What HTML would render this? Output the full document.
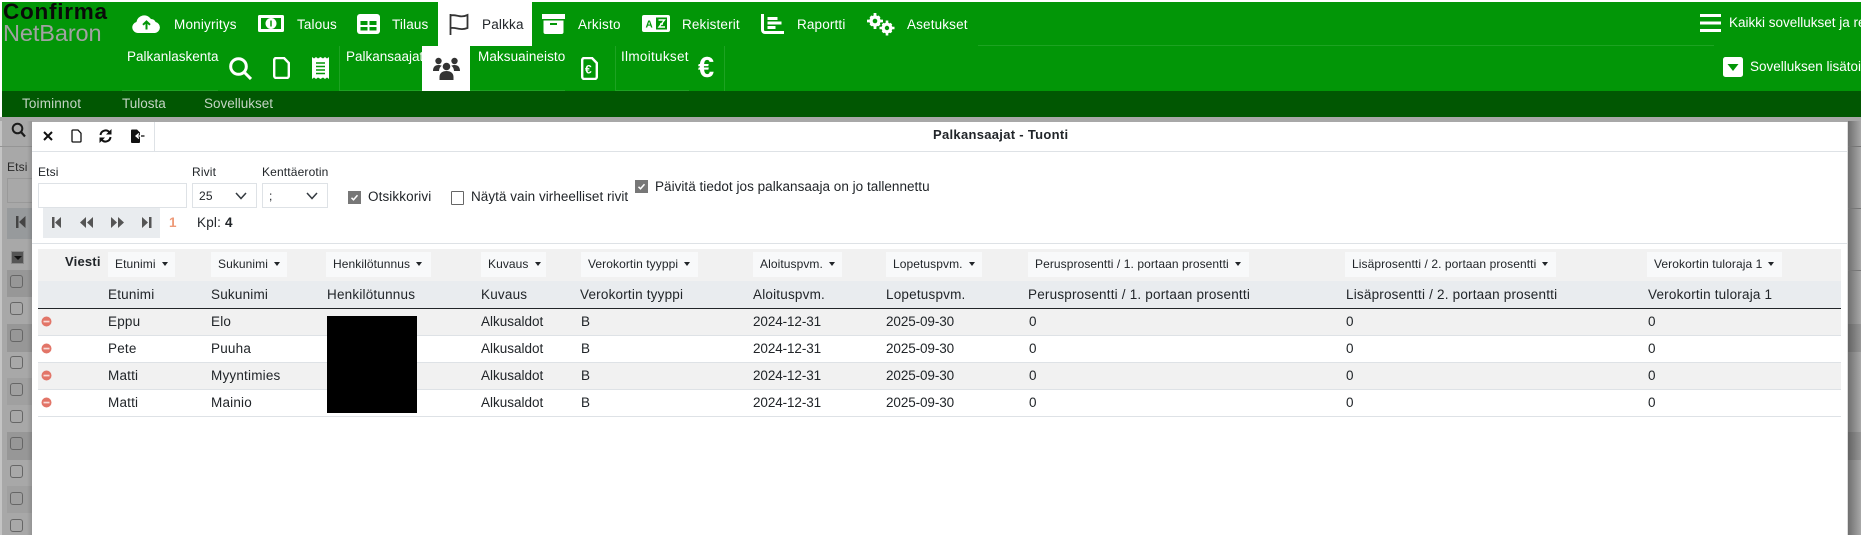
<!DOCTYPE html>
<html lang="fi"><head><meta charset="utf-8"><title>Palkansaajat - Tuonti</title>
<style>
html,body{margin:0;padding:0;background:#fff}
#p{position:relative;width:1861px;height:535px;overflow:hidden;font-family:"Liberation Sans",Arial,sans-serif;font-size:13.5px;color:#212529;letter-spacing:.2px}
#p div,#p svg{position:absolute}
.t{white-space:nowrap;line-height:16px;height:16px}
.w{color:#fff}
.s{font-size:12px;letter-spacing:.15px}
.f{letter-spacing:.1px}
.d{letter-spacing:-.1px}
.k{letter-spacing:0}
.n{letter-spacing:.15px}
.b{background:#f8f9fa;height:25px;top:252px;line-height:24px;font-size:12px;letter-spacing:.08px;padding-left:7px;box-sizing:border-box;white-space:nowrap}
.b i{display:inline-block;border:3.5px solid transparent;border-top:4px solid #212529;border-bottom:0;margin-left:6px;vertical-align:2px}
.cb{width:13px;height:13px;border:1px solid #666;border-radius:3px;left:10px;box-sizing:border-box}
</style></head><body><div id="p">

<!-- overlay background -->
<div style="left:0;top:117px;width:1861px;height:418px;background:#a8a8a8"></div>
<div style="left:0;top:121px;width:2px;height:414px;background:#c4c4c4"></div>
<div style="left:0;top:146px;width:32px;height:1px;background:#959595"></div>
<div style="left:7px;top:208px;width:25px;height:31px;background:#979a9c"></div>
<div style="left:7px;top:270px;width:25px;height:27px;background:#979797"></div>
<div style="left:7px;top:324px;width:25px;height:28px;background:#979797"></div>
<div style="left:7px;top:378px;width:25px;height:27px;background:#a0a0a0"></div>
<div style="left:7px;top:432px;width:25px;height:28px;background:#979797"></div>
<div style="left:7px;top:486px;width:25px;height:27px;background:#a0a0a0"></div>
<svg style="left:11px;top:122px" width="15" height="16" viewBox="0 0 15 16"><circle cx="6.500" cy="6.500" r="4.800" fill="none" stroke="#1c1c1c" stroke-width="2"/><path d="M10 10l4 4.500" stroke="#1c1c1c" stroke-width="2.200"/></svg>
<div class="t s" style="left:7px;top:159px;color:#2a2a2a">Etsi</div>
<div style="left:7px;top:178px;width:26px;height:25px;border:1px solid #999;box-sizing:border-box"></div>
<svg style="left:16px;top:216px" width="10" height="12" viewBox="0 0 10 12"><path d="M0 0h2.500v12H0zM9.500 0v12L3 6z" fill="#444"/></svg>
<div style="left:11px;top:251px;width:13px;height:13px;background:#555;border:1px solid #8a8a8a;box-sizing:border-box"></div>
<div style="left:14px;top:256px;border:4px solid transparent;border-top:4px solid #111;border-bottom:0"></div>
<div class="cb" style="top:275px"></div><div class="cb" style="top:302px"></div><div class="cb" style="top:329px"></div><div class="cb" style="top:356px"></div><div class="cb" style="top:383px"></div><div class="cb" style="top:410px"></div><div class="cb" style="top:437px"></div><div class="cb" style="top:465px"></div><div class="cb" style="top:492px"></div><div class="cb" style="top:519px"></div>
<div style="left:1848px;top:121px;width:13px;height:414px;background:linear-gradient(90deg,#6f6f6f,#a8a8a8)"></div>
<div style="left:1848px;top:146px;width:13px;height:1px;background:#777"></div>
<div style="left:1848px;top:208px;width:13px;height:1px;background:#777"></div>
<div style="left:1848px;top:270px;width:13px;height:1px;background:#777"></div>
<div style="left:1848px;top:324px;width:13px;height:28px;background:rgba(0,0,0,.1)"></div>
<div style="left:1848px;top:432px;width:13px;height:28px;background:rgba(0,0,0,.1)"></div>
<div style="left:27px;top:121px;width:5px;height:414px;background:linear-gradient(90deg,rgba(0,0,0,0),rgba(0,0,0,.12))"></div>

<!-- header -->
<div style="left:2px;top:2px;width:1859px;height:89px;background:#029607"></div>
<div style="left:2px;top:91px;width:1859px;height:26px;background:#015702"></div>
<div style="left:978px;top:45px;width:736px;height:1px;background:#1da322"></div>
<div style="left:122px;top:90px;width:96px;height:1px;background:#1da322"></div>
<div style="left:339px;top:46px;width:1px;height:45px;background:#1da322"></div>
<div style="left:340px;top:90px;width:82px;height:1px;background:#1da322"></div>
<div style="left:470px;top:90px;width:95px;height:1px;background:#1da322"></div>
<div style="left:615px;top:46px;width:1px;height:45px;background:#1da322"></div>
<div style="left:616px;top:90px;width:73px;height:1px;background:#1da322"></div>
<div style="left:724px;top:46px;width:1px;height:45px;background:#1da322"></div>

<!-- logo -->
<div class="t" style="left:3px;top:0;height:24px;line-height:24px;font-size:22.5px;font-weight:700;color:#0a0a0a;letter-spacing:.75px">Confirma</div>
<div class="t" style="left:3px;top:21px;height:24px;line-height:24px;font-size:23.5px;color:#a2a2a2;letter-spacing:-.1px">NetBaron</div>

<!-- main nav icons -->
<svg style="left:132px;top:14px" width="29" height="19" viewBox="0 0 29 19"><path d="M6 19a5.600 5.600 0 0 1-1.600-11A8 8 0 0 1 19 5a5 5 0 0 1 4.600 3A5.600 5.600 0 0 1 23 19z" fill="#fff"/><path d="M14.500 15.500V8M11 10.800l3.500-3.300 3.500 3.300" fill="none" stroke="#029607" stroke-width="2"/></svg>
<svg style="left:258px;top:15px" width="26" height="17" viewBox="0 0 26 17"><path d="M1.500 1.500h23v14h-23z" fill="#029607" stroke="#fff" stroke-width="3" stroke-linejoin="round"/><circle cx="13" cy="8.500" r="5.500" fill="#fff"/><path d="M13 5.500v6" stroke="#029607" stroke-width="1.500"/></svg>
<svg style="left:357px;top:14px" width="23" height="20" viewBox="0 0 23 20"><rect width="23" height="20" rx="3" fill="#fff"/><path d="M3.500 7h7v4h-7zM12.500 7h7v4h-7zM3.500 13h7v3.500h-7zM12.500 13h7v3.500h-7z" fill="#029607"/></svg>
<div style="left:438px;top:2px;width:94px;height:44px;background:#fff"></div>
<svg style="left:449px;top:13px" width="20" height="22" viewBox="0 0 20 22"><path d="M1.500 1v21" stroke="#333" stroke-width="1.800"/><path d="M1.500 2.500c3-1 6 .2 9 .7s5 .2 8-1.200v13c-3 1.200-5 1.400-8 .9s-6-1.500-9-.9" fill="none" stroke="#333" stroke-width="1.800"/></svg>
<svg style="left:542px;top:14px" width="23" height="20" viewBox="0 0 23 20"><rect width="23" height="5" fill="#fff"/><path d="M1.500 6.500h20V18a2 2 0 0 1-2 2h-16a2 2 0 0 1-2-2z" fill="#fff"/><path d="M8 10h7" stroke="#029607" stroke-width="2"/></svg>
<svg style="left:642px;top:15px" width="28" height="17" viewBox="0 0 28 17"><rect width="28" height="17" rx="2" fill="#fff"/><rect x="14" y="2.500" width="11" height="12" fill="#029607"/><text x="3.500" y="12.500" font-size="10" font-weight="700" fill="#029607" font-family="Liberation Sans">A</text><path d="M16.500 5h6l-5.500 7h6M18 9h3" fill="none" stroke="#fff" stroke-width="1.400"/></svg>
<svg style="left:761px;top:14px" width="23" height="20" viewBox="0 0 23 20"><path d="M1.500 0v16a2.500 2.500 0 0 0 2.500 2.500H23" fill="none" stroke="#fff" stroke-width="3"/><path d="M6.500 3h10v3H6.500zM6.500 7.500h14v3H6.500zM6.500 12h8v3h-8z" fill="#fff"/></svg>
<svg style="left:867px;top:13px" width="28" height="23" viewBox="0 0 28 23"><g fill="#fff"><circle cx="8" cy="8" r="5.600"/><path d="M6.600 0h2.800v16H6.600zM0 6.600h16v2.800H0zM2.500 4.400l2-2 9 9-2 2zM11.500 2.400l2 2-9 9-2-2z"/></g><circle cx="8" cy="8" r="2.300" fill="#029607"/><g fill="#fff"><circle cx="20" cy="15" r="5.400"/><path d="M18.700 7.500h2.600v15h-2.600zM12.500 13.700h15v2.600h-15zM14.700 11.500l1.800-1.800 8.800 8.800-1.800 1.800zM23.500 9.700l1.800 1.800-8.800 8.800-1.800-1.800z"/></g><circle cx="20" cy="15" r="2.200" fill="#029607"/></svg>

<div class="t w" style="left:174px;top:17px">Moniyritys</div>
<div class="t w n" style="left:297px;top:17px">Talous</div>
<div class="t w n" style="left:392px;top:17px">Tilaus</div>
<div class="t" style="left:482px;top:17px">Palkka</div>
<div class="t w" style="left:578px;top:17px">Arkisto</div>
<div class="t w n" style="left:682px;top:17px">Rekisterit</div>
<div class="t w n" style="left:797px;top:17px">Raportti</div>
<div class="t w n" style="left:907px;top:17px">Asetukset</div>

<!-- sub nav -->
<div class="t w k" style="left:127px;top:49px">Palkanlaskenta</div>
<div class="t w k" style="left:346px;top:49px">Palkansaajat</div>
<div class="t w k" style="left:478px;top:49px;letter-spacing:.08px">Maksuaineisto</div>
<div class="t w" style="left:621px;top:49px;letter-spacing:.3px">Ilmoitukset</div>
<svg style="left:229px;top:57px" width="23" height="23" viewBox="0 0 23 23"><circle cx="9.500" cy="9.500" r="7.800" fill="none" stroke="#fff" stroke-width="3"/><path d="M15 15l7 7" stroke="#fff" stroke-width="3"/></svg>
<svg style="left:273px;top:57px" width="17" height="22" viewBox="0 0 17 22"><path d="M1.200 3a2 2 0 0 1 2-2H11l4.800 5v13a2 2 0 0 1-2 2H3.200a2 2 0 0 1-2-2z" fill="none" stroke="#fff" stroke-width="2.400"/></svg>
<svg style="left:312px;top:57px" width="17" height="22" viewBox="0 0 17 22"><path d="M0 0l2 1.500L4 0l2 1.500L8.500 0 11 1.500 13 0l2 1.500L17 0v22l-2-1.500-2 1.500-2-1.500L8.500 22 6 20.500 4 22l-2-1.500L0 22z" fill="#fff"/><path d="M4 6h9M4 9.500h9M4 13h9M4 16.500h9" stroke="#029607" stroke-width="1.500"/></svg>
<div style="left:422px;top:46px;width:48px;height:45px;background:#fff"></div>
<svg style="left:433px;top:57px" width="27" height="23" viewBox="0 0 27 23"><g fill="#333"><circle cx="5.500" cy="4" r="3.200"/><circle cx="21.500" cy="4" r="3.200"/><path d="M0 14c0-4 2-6 5.500-6 1.300 0 2.400.3 3.200.8C7 10 6 12 6 14z"/><path d="M27 14c0-4-2-6-5.500-6-1.300 0-2.400.3-3.200.8C20 10 21 12 21 14z"/><circle cx="13.500" cy="9.500" r="3.800"/><path d="M6.500 23v-3c0-4 3-6 7-6s7 2 7 6v3z"/></g></svg>
<svg style="left:581px;top:57px" width="17" height="23" viewBox="0 0 17 23"><path d="M1.200 3a2 2 0 0 1 2-2H11l4.800 5v14a2 2 0 0 1-2 2H3.200a2 2 0 0 1-2-2z" fill="none" stroke="#fff" stroke-width="2.400"/><text x="4" y="16.500" font-size="12" font-weight="700" fill="#fff" font-family="Liberation Sans">€</text></svg>
<div class="t w k" style="left:698px;top:55px;height:26px;line-height:26px;font-size:29px;font-weight:700">€</div>

<!-- right header -->
<svg style="left:1700px;top:14px" width="21" height="18" viewBox="0 0 21 18"><path d="M0 1.500h21M0 9h21M0 16.500h21" stroke="#fff" stroke-width="3"/></svg>
<div class="t w k" style="left:1729px;top:15px">Kaikki sovellukset ja re</div>
<svg style="left:1723px;top:57px" width="20" height="20" viewBox="0 0 20 20"><rect width="20" height="20" rx="2.500" fill="#fff"/><path d="M4.500 7h11L10 14z" fill="#029607"/></svg>
<div class="t w k" style="left:1750px;top:59px">Sovelluksen lisätoi</div>

<!-- dark nav -->
<div class="t n" style="left:22px;top:96px;color:#c4d4c4">Toiminnot</div>
<div class="t k" style="left:122px;top:96px;color:#c4d4c4">Tulosta</div>
<div class="t k" style="left:204px;top:96px;color:#c4d4c4">Sovellukset</div>

<!-- modal -->
<div style="left:32px;top:122px;width:1816px;height:413px;background:#fff;border-right:1px solid #ddd;box-sizing:border-box"></div>
<div style="left:32px;top:151px;width:1815px;height:1px;background:#dee2e6"></div>
<div style="left:154px;top:122px;width:1px;height:29px;background:#dee2e6"></div>
<svg style="left:43px;top:131px" width="10" height="10" viewBox="0 0 10 10"><path d="M1 1l8 8M9 1l-8 8" stroke="#111" stroke-width="2"/></svg>
<svg style="left:71px;top:129px" width="11" height="14" viewBox="0 0 11 14"><path d="M1 2a1 1 0 0 1 1-1h5l3 3.200V12a1 1 0 0 1-1 1H2a1 1 0 0 1-1-1z" fill="none" stroke="#111" stroke-width="1.300"/></svg>
<svg style="left:99px;top:129px" width="13" height="14" viewBox="0 0 13 14"><path d="M1.500 6A5 5 0 0 1 10.500 3.500M11.500 8A5 5 0 0 1 2.500 10.500" fill="none" stroke="#111" stroke-width="2"/><path d="M12.500 0v5.500H7zM.5 14V8.500H6z" fill="#111"/></svg>
<svg style="left:130px;top:129px" width="15" height="14" viewBox="0 0 15 14"><path d="M1 1.500a1 1 0 0 1 1-1h5l3 3V13a1 1 0 0 1-1 1H2a1 1 0 0 1-1-1z" fill="#111"/><path d="M14.500 7H6.500M9 4.500L6 7l3 2.500" fill="none" stroke="#fff" stroke-width="1.300"/><path d="M11 7h3.500" stroke="#111" stroke-width="1.300"/></svg>
<div class="t" style="left:933px;top:127px;font-weight:700;font-size:13px;letter-spacing:.3px">Palkansaajat - Tuonti</div>

<!-- filters -->
<div class="t s" style="left:38px;top:164px">Etsi</div>
<div class="t s" style="left:192px;top:164px">Rivit</div>
<div class="t s" style="left:262px;top:164px">Kenttäerotin</div>
<div style="left:38px;top:183px;width:149px;height:25px;border:1px solid #dee2e6;box-sizing:border-box"></div>
<div style="left:192px;top:183px;width:65px;height:25px;border:1px solid #dee2e6;box-sizing:border-box"></div>
<div style="left:262px;top:183px;width:66px;height:25px;border:1px solid #dee2e6;box-sizing:border-box"></div>
<div class="t s" style="left:199px;top:188px">25</div>
<div class="t s" style="left:269px;top:188px">;</div>
<svg style="left:235px;top:192px" width="12" height="8" viewBox="0 0 12 8"><path d="M1 1l5 5.500L11 1" fill="none" stroke="#343a40" stroke-width="1.500"/></svg>
<svg style="left:306px;top:192px" width="12" height="8" viewBox="0 0 12 8"><path d="M1 1l5 5.500L11 1" fill="none" stroke="#343a40" stroke-width="1.500"/></svg>
<svg style="left:348px;top:191px" width="13" height="13" viewBox="0 0 13 13"><rect width="13" height="13" fill="#777"/><path d="M3.500 6.800l2 2 4-4.500" fill="none" stroke="#fff" stroke-width="1.500"/></svg>
<div class="t f" style="left:368px;top:189px">Otsikkorivi</div>
<div style="left:451px;top:191px;width:13px;height:14px;border:1px solid #666;border-radius:1px;box-sizing:border-box"></div>
<div class="t" style="left:471px;top:189px;letter-spacing:.04px">Näytä vain virheelliset rivit</div>
<svg style="left:635px;top:180px" width="13" height="13" viewBox="0 0 13 13"><rect width="13" height="13" fill="#777"/><path d="M3.500 6.800l2 2 4-4.500" fill="none" stroke="#fff" stroke-width="1.500"/></svg>
<div class="t" style="left:655px;top:179px;letter-spacing:.03px">Päivitä tiedot jos palkansaaja on jo tallennettu</div>

<!-- pager -->
<div style="left:43px;top:208px;width:117px;height:30px;background:#e9ecef"></div>
<svg style="left:52px;top:217px" width="110" height="11" viewBox="0 0 110 11"><g fill="#555"><path d="M0 0h2.500v11H0zM9 0v11L3 5.500z"/><path d="M34 0v11l-6-5.500zM41 0v11l-6-5.500z"/><path d="M59 0v11l6-5.500zM66 0v11l6-5.500z"/><path d="M90 0v11l6-5.500zM97 0h2.500v11H97z"/></g></svg>
<div class="t" style="left:169px;top:215px;color:#ee9a78;font-weight:700">1</div>
<div class="t" style="left:197px;top:215px">Kpl: <b>4</b></div>
<div style="left:32px;top:243px;width:1815px;height:1px;background:#dee2e6"></div>

<!-- table -->
<div style="left:38px;top:249px;width:1803px;height:32px;background:#f1f1f1"></div>
<div style="left:38px;top:281px;width:1803px;height:27px;background:#e9ecef"></div>
<div style="left:38px;top:308px;width:1803px;height:1px;background:#212529"></div>
<div style="left:38px;top:309px;width:1803px;height:26px;background:#f1f1f1"></div>
<div style="left:38px;top:363px;width:1803px;height:26px;background:#f1f1f1"></div>
<div style="left:38px;top:335px;width:1803px;height:1px;background:#dee2e6"></div>
<div style="left:38px;top:362px;width:1803px;height:1px;background:#dee2e6"></div>
<div style="left:38px;top:389px;width:1803px;height:1px;background:#dee2e6"></div>
<div style="left:38px;top:416px;width:1803px;height:1px;background:#dee2e6"></div>

<div class="t" style="left:65px;top:254px;font-weight:700;font-size:13px;letter-spacing:.2px">Viesti</div>
<div class="b" style="left:108px;width:67px">Etunimi<i></i></div>
<div class="b" style="left:211px;width:76px">Sukunimi<i></i></div>
<div class="b" style="left:326px;width:105px">Henkilötunnus<i></i></div>
<div class="b" style="left:481px;width:65px">Kuvaus<i></i></div>
<div class="b" style="left:581px;width:117px">Verokortin tyyppi<i></i></div>
<div class="b" style="left:753px;width:89px">Aloituspvm.<i></i></div>
<div class="b" style="left:886px;width:96px">Lopetuspvm.<i></i></div>
<div class="b" style="left:1028px;width:221px">Perusprosentti / 1. portaan prosentti<i></i></div>
<div class="b" style="left:1345px;width:211px">Lisäprosentti / 2. portaan prosentti<i></i></div>
<div class="b" style="left:1647px;width:135px">Verokortin tuloraja 1<i></i></div>

<div class="t" style="left:108px;top:287px">Etunimi</div>
<div class="t" style="left:211px;top:287px">Sukunimi</div>
<div class="t" style="left:327px;top:287px">Henkilötunnus</div>
<div class="t" style="left:481px;top:287px">Kuvaus</div>
<div class="t" style="left:580px;top:287px">Verokortin tyyppi</div>
<div class="t" style="left:753px;top:287px">Aloituspvm.</div>
<div class="t" style="left:886px;top:287px">Lopetuspvm.</div>
<div class="t" style="left:1028px;top:287px">Perusprosentti / 1. portaan prosentti</div>
<div class="t" style="left:1346px;top:287px">Lisäprosentti / 2. portaan prosentti</div>
<div class="t" style="left:1648px;top:287px">Verokortin tuloraja 1</div>

<!-- rows -->
<svg style="left:41px;top:316px" width="11" height="11" viewBox="0 0 11 11"><circle cx="5.500" cy="5.500" r="5" fill="#e27568"/><rect x="2.500" y="4.700" width="6" height="1.700" fill="#f8dcd8"/></svg>
<div class="t" style="left:108px;top:314px">Eppu</div><div class="t" style="left:211px;top:314px">Elo</div><div class="t k" style="left:481px;top:314px">Alkusaldot</div><div class="t" style="left:581px;top:314px">B</div><div class="t d" style="left:753px;top:314px">2024-12-31</div><div class="t d" style="left:886px;top:314px">2025-09-30</div><div class="t" style="left:1029px;top:314px">0</div><div class="t" style="left:1346px;top:314px">0</div><div class="t" style="left:1648px;top:314px">0</div>

<svg style="left:41px;top:343px" width="11" height="11" viewBox="0 0 11 11"><circle cx="5.500" cy="5.500" r="5" fill="#e27568"/><rect x="2.500" y="4.700" width="6" height="1.700" fill="#f8dcd8"/></svg>
<div class="t" style="left:108px;top:341px">Pete</div><div class="t" style="left:211px;top:341px">Puuha</div><div class="t k" style="left:481px;top:341px">Alkusaldot</div><div class="t" style="left:581px;top:341px">B</div><div class="t d" style="left:753px;top:341px">2024-12-31</div><div class="t d" style="left:886px;top:341px">2025-09-30</div><div class="t" style="left:1029px;top:341px">0</div><div class="t" style="left:1346px;top:341px">0</div><div class="t" style="left:1648px;top:341px">0</div>

<svg style="left:41px;top:370px" width="11" height="11" viewBox="0 0 11 11"><circle cx="5.500" cy="5.500" r="5" fill="#e27568"/><rect x="2.500" y="4.700" width="6" height="1.700" fill="#f8dcd8"/></svg>
<div class="t" style="left:108px;top:368px">Matti</div><div class="t" style="left:211px;top:368px">Myyntimies</div><div class="t k" style="left:481px;top:368px">Alkusaldot</div><div class="t" style="left:581px;top:368px">B</div><div class="t d" style="left:753px;top:368px">2024-12-31</div><div class="t d" style="left:886px;top:368px">2025-09-30</div><div class="t" style="left:1029px;top:368px">0</div><div class="t" style="left:1346px;top:368px">0</div><div class="t" style="left:1648px;top:368px">0</div>

<svg style="left:41px;top:397px" width="11" height="11" viewBox="0 0 11 11"><circle cx="5.500" cy="5.500" r="5" fill="#e27568"/><rect x="2.500" y="4.700" width="6" height="1.700" fill="#f8dcd8"/></svg>
<div class="t" style="left:108px;top:395px">Matti</div><div class="t" style="left:211px;top:395px">Mainio</div><div class="t k" style="left:481px;top:395px">Alkusaldot</div><div class="t" style="left:581px;top:395px">B</div><div class="t d" style="left:753px;top:395px">2024-12-31</div><div class="t d" style="left:886px;top:395px">2025-09-30</div><div class="t" style="left:1029px;top:395px">0</div><div class="t" style="left:1346px;top:395px">0</div><div class="t" style="left:1648px;top:395px">0</div>

<div style="left:327px;top:316px;width:90px;height:97px;background:#000"></div>
</div></body></html>
